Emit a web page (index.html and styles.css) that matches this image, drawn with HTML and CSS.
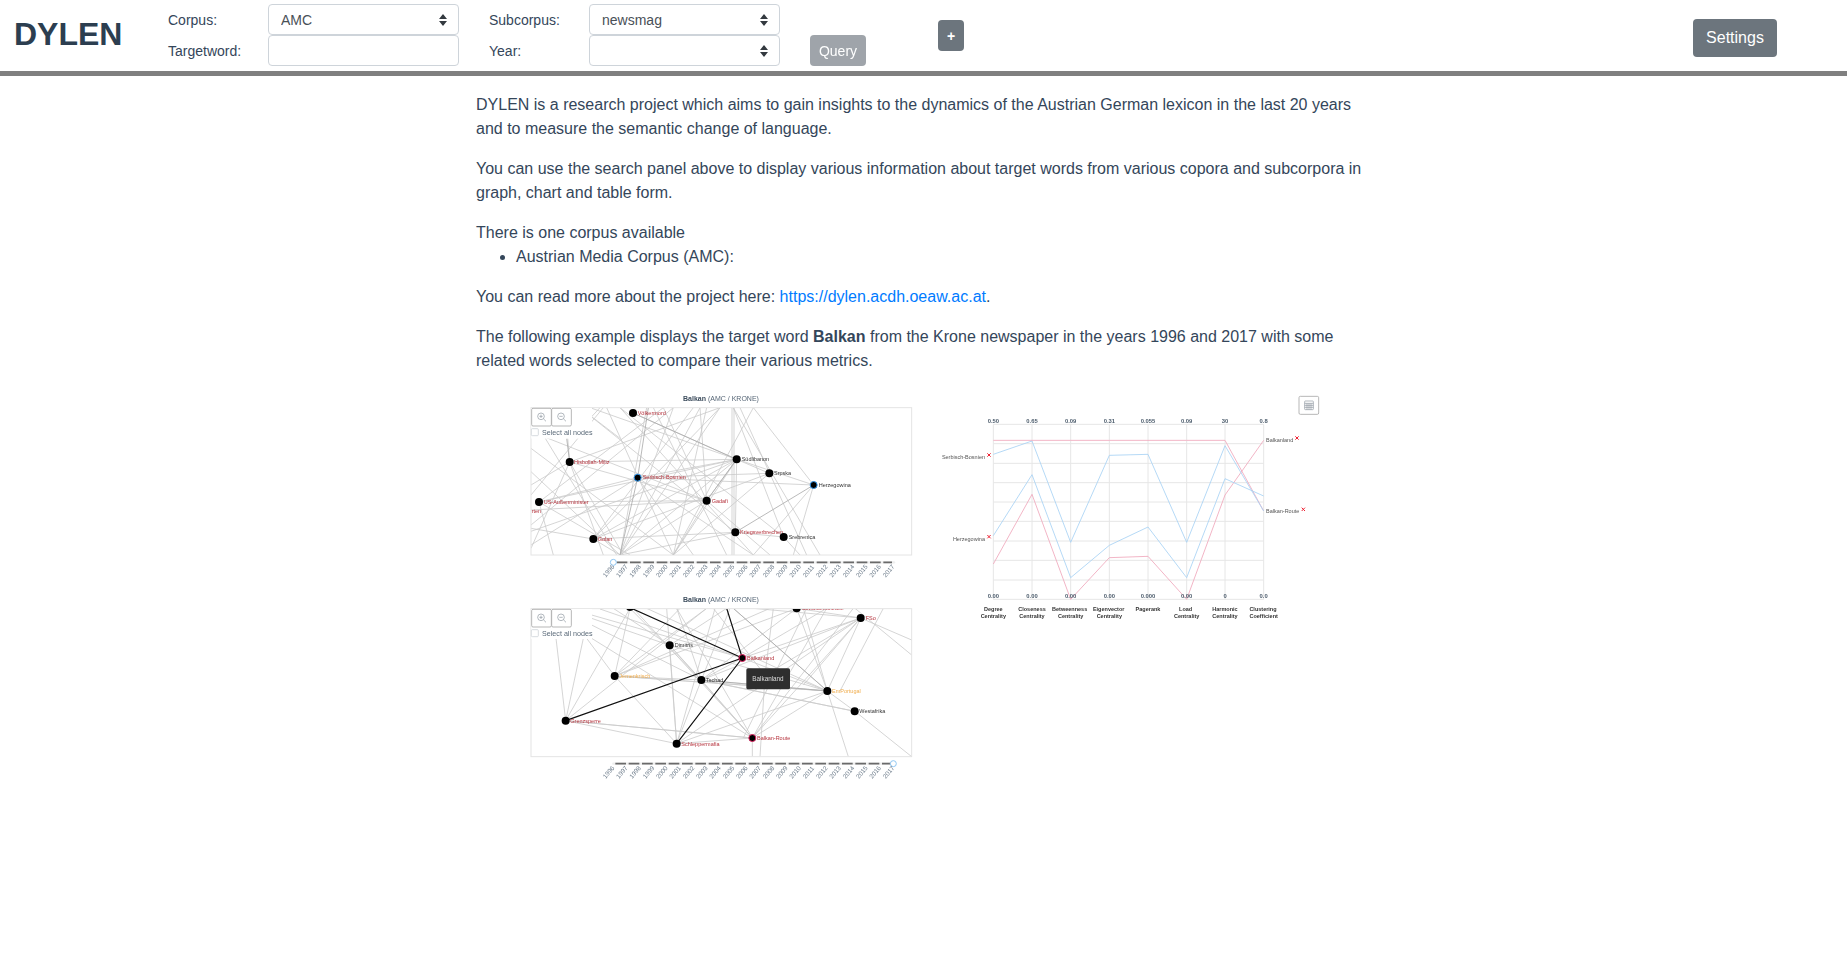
FILE: index.html
```html
<!DOCTYPE html>
<html lang="en">
<head>
    <meta charset="UTF-8">
    <title>DYLEN</title>
    <link rel="stylesheet" href="styles.css">
</head>
<body>

    <header class="topbar">
        <div class="brand">DYLEN</div>
        <form class="query-form">
            <label>Corpus:</label>
            <select><option>AMC</option></select>
            <label>Subcorpus:</label>
            <select><option>newsmag</option></select>
            <span></span>
            <label>Targetword:</label>
            <input type="text">
            <label>Year:</label>
            <select><option></option></select>
            <button type="button" class="btn btn-query" disabled>Query</button>
        </form>
        <button type="button" class="btn btn-add">+</button>
        <button type="button" class="btn btn-settings">Settings</button>
    </header>

    <main class="content">
        <p>DYLEN is a research project which aims to gain insights to the dynamics of the Austrian German lexicon in the last 20 years and to measure the semantic change of language.</p>
        <p>You can use the search panel above to display various information about target words from various copora and subcorpora in graph, chart and table form.</p>
        <div class="corpora">
            There is one corpus available
            <ul>
                <li>Austrian Media Corpus (AMC):</li>
            </ul>
        </div>
        <p>You can read more about the project here: <a href="#">https://dylen.acdh.oeaw.ac.at</a>.</p>
        <p>The following example displays the target word <b>Balkan</b> from the Krone newspaper in the years 1996 and 2017 with some related words selected to compare their various metrics.</p>

        <div class="figures">
            <div class="graphs">
                <!-- first graph, 1996 -->
                <svg class="figure graph-top" viewBox="0 0 1230 600">
                    <text class="title" x="603" y="47"><tspan class="bold">Balkan</tspan> (AMC / KRONE)</text>
                    <rect class="frame" x="33" y="68" width="1142" height="442"/>
                    <svg x="34" y="69" width="1140" height="440" viewBox="34 69 1140 440">
                        <path class="edge" d="M339 84L650 223M210 68L650 223M430 68L560 347M650 223L300 510M650 223L460 510M650 223L30 440M650 223L149 231M650 223L353 278M650 223L57 351M650 223L560 347M650 223L646 442M650 223L881 300M650 223L748 265M660 68L860 510M700 68L881 300M881 300L353 278M881 300L820 510M881 300L700 510M748 265L353 278M748 265L220 462M748 265L460 510M560 347L57 351M560 347L149 231M560 347L300 510M560 347L460 510M560 347L540 68M560 347L33 140M560 347L750 510M560 347L33 375M353 278L700 510M353 278L57 351M353 278L33 480M353 278L520 510M149 231L33 300M149 231L310 510M149 231L250 510M149 231L600 68M149 231L33 490M149 231L140 120M220 462L600 68M220 462L646 442M220 462L520 68M220 462L650 223M220 462L33 430M220 462L300 510M57 351L430 68M57 351L100 510M57 351L330 510M646 442L791 456M646 442L300 510M646 442L180 68M791 456L640 68M791 456L300 68M791 456L840 510M33 190L460 510M33 260L300 510M33 420L460 68M33 90L290 510M250 68L33 330M460 68L300 510M540 68L300 510M600 68L300 510M300 510L380 68M460 510L260 68M460 510L560 68M460 510L700 68M700 510L300 68M900 510L640 68M620 510L400 68M215 95L240 68M215 95L300 160M33 150L100 68M636 68L636 510M642 68L642 510"/>
                        <path class="edge edge-mid" d="M339 84L650 223M353 278L385 68M353 278L300 510M881 300L646 442M560 347L650 223M140 160L149 231"/>
                    </svg>
                    <rect class="panel" x="34" y="69" width="182" height="92"/>
                    <circle class="node" cx="339" cy="84" r="12"/><text class="label red" x="353" y="89">Völkermord</text>
                    <circle class="node" cx="650" cy="223" r="12"/><text class="label" x="665" y="228">Südlibanon</text>
                    <circle class="node" cx="748" cy="265" r="12"/><text class="label" x="762" y="271">Srpska</text>
                    <circle class="node ring-blue" cx="881" cy="300" r="10.5"/><text class="label" x="896" y="305">Herzegowina</text>
                    <circle class="node" cx="149" cy="231" r="12"/><text class="label red" x="162" y="236">Hisbollah-Miliz</text>
                    <circle class="node ring-blue" cx="353" cy="278" r="10.5"/><text class="label red" x="368" y="283">Serbisch-Bosnien</text>
                    <circle class="node" cx="57" cy="351" r="12"/><text class="label red" x="71" y="356">US-Außenminister</text>
                    <text class="label red" x="35" y="384">rten</text>
                    <circle class="node" cx="560" cy="347" r="12"/><text class="label red" x="575" y="353">Gadafi</text>
                    <circle class="node" cx="646" cy="442" r="12"/><text class="label red" x="660" y="448">Kriegsverbrechen</text>
                    <circle class="node" cx="791" cy="456" r="12"/><text class="label" x="806" y="461">Srebrenica</text>
                    <circle class="node" cx="220" cy="462" r="12"/><text class="label red" x="233" y="468">Golan</text>

                    <rect class="zoom-btn" x="35" y="70" width="59" height="53" rx="4"/>
                    <rect class="zoom-btn" x="95" y="70" width="59" height="53" rx="4"/>
                    <g class="zoom-icon"><circle cx="63" cy="94" r="10"/><path d="M71 102L78 109M58 94H68M63 89V99"/></g>
                    <g class="zoom-icon"><circle cx="123" cy="94" r="10"/><path d="M131 102L138 109M118 94H128"/></g>
                    <rect class="check" x="34" y="131" width="21" height="21" rx="3"/>
                    <text class="check-label" x="66" y="149">Select all nodes</text>

                    <line class="rail" x1="280" y1="532" x2="1122" y2="532"/>
                    <line class="dashes" x1="290" y1="532" x2="1116" y2="532"/>
                    <circle class="handle" cx="280" cy="532" r="9"/>
                    <g class="years">
                        <text transform="translate(257 578) rotate(-50)">1996</text>
                        <text transform="translate(297 578) rotate(-50)">1997</text>
                        <text transform="translate(337 578) rotate(-50)">1998</text>
                        <text transform="translate(377 578) rotate(-50)">1999</text>
                        <text transform="translate(417 578) rotate(-50)">2000</text>
                        <text transform="translate(457 578) rotate(-50)">2001</text>
                        <text transform="translate(497 578) rotate(-50)">2002</text>
                        <text transform="translate(537 578) rotate(-50)">2003</text>
                        <text transform="translate(577 578) rotate(-50)">2004</text>
                        <text transform="translate(617 578) rotate(-50)">2005</text>
                        <text transform="translate(657 578) rotate(-50)">2006</text>
                        <text transform="translate(697 578) rotate(-50)">2007</text>
                        <text transform="translate(737 578) rotate(-50)">2008</text>
                        <text transform="translate(777 578) rotate(-50)">2009</text>
                        <text transform="translate(817 578) rotate(-50)">2010</text>
                        <text transform="translate(857 578) rotate(-50)">2011</text>
                        <text transform="translate(897 578) rotate(-50)">2012</text>
                        <text transform="translate(937 578) rotate(-50)">2013</text>
                        <text transform="translate(977 578) rotate(-50)">2014</text>
                        <text transform="translate(1017 578) rotate(-50)">2015</text>
                        <text transform="translate(1057 578) rotate(-50)">2016</text>
                        <text transform="translate(1097 578) rotate(-50)">2017</text>
                    </g>
                </svg>

                <!-- second graph, 2017 -->
                <svg class="figure" viewBox="0 0 1230 600">
                    <text class="title" x="603" y="50"><tspan class="bold">Balkan</tspan> (AMC / KRONE)</text>
                    <rect class="frame" x="33" y="71" width="1142" height="444"/>
                    <svg x="34" y="72" width="1140" height="442" viewBox="34 72 1140 442">
                        <path class="edge" d="M137 407L108 160M137 407L190 160M137 407L330 70M137 407L560 70M137 407L470 476M137 407L697 459M284 273L200 160M284 273L330 70M284 273L560 70M284 273L480 70M284 273L750 70M284 273L544 285M284 273L922 318M284 273L470 476M284 273L830 70M449 181L215 100M449 181L470 476M449 181L697 459M449 181L544 285M449 181L922 318M449 181L280 70M449 181L620 70M544 285L330 70M544 285L215 120M544 285L470 70M544 285L630 70M544 285L830 70M544 285L1022 99M544 285L922 318M544 285L697 459M544 285L470 476M544 285L1005 379M667 219L215 90M667 219L240 72M667 219L920 70M667 219L1022 99M667 219L922 318M667 219L544 285M697 459L1022 99M697 459L922 318M697 459L470 476M697 459L470 70M697 459L340 70M697 459L215 160M697 459L697 515M697 459L920 70M697 459L137 407M470 476L1022 99M470 476L922 318M470 476L440 70M922 318L380 70M922 318L640 70M922 318L830 70M922 318L1022 99M922 318L1005 379M922 318L985 515M922 318L850 70M922 318L284 273M1005 379L1175 515M1005 379L544 285M1022 99L1175 165M1022 99L830 70M1022 99L700 70M1022 99L850 300M1090 70L960 318M1005 70L1175 210M735 270L720 515M735 270L1022 99M735 270L580 70M735 270L760 70M1000 70L697 459M860 70L670 459M585 70L470 476"/>
                        <path class="edge edge-mid" d="M544 285L922 318M640 70L922 318"/>
                        <path class="edge edge-hot" d="M667 219L330 68M667 219L620 70M667 219L137 407M667 219L470 476"/>
                        <circle class="node" cx="830" cy="70" r="12"/>
                        <circle class="node" cx="330" cy="66" r="12"/>
                        <text class="label red" x="845" y="76">Sozialdemokratie</text>
                    </svg>
                    <rect class="panel" x="34" y="72" width="182" height="90"/>
                    <circle class="node" cx="1022" cy="99" r="12"/><text class="label red" x="1037" y="105">FSo</text>
                    <circle class="node" cx="449" cy="181" r="12"/><text class="label" x="464" y="186">Dimitris</text>
                    <circle class="node ring-pink" cx="667" cy="219" r="10.5"/><text class="label red" x="681" y="225">Balkanland</text>
                    <circle class="node" cx="284" cy="273" r="12"/><text class="label orange" x="298" y="279">Jemenkrisch</text>
                    <circle class="node" cx="544" cy="285" r="12"/><text class="label" x="558" y="291">Tschad</text>
                    <circle class="node" cx="735" cy="270" r="12"/>
                    <circle class="node" cx="922" cy="318" r="12"/><text class="label orange" x="936" y="324">EmPortugal</text>
                    <circle class="node" cx="1004" cy="379" r="12"/><text class="label" x="1018" y="384">Westafrika</text>
                    <circle class="node" cx="137" cy="407" r="12"/><text class="label red" x="151" y="413">Grenzsperre</text>
                    <circle class="node" cx="470" cy="476" r="12"/><text class="label red" x="484" y="482">Schleppermafia</text>
                    <circle class="node ring-pink" cx="697" cy="459" r="10.5"/><text class="label red" x="711" y="465">Balkan-Route</text>

                    <rect class="tip" x="679" y="250" width="131" height="63" rx="5"/>
                    <text class="tip-text" x="744" y="289">Balkanland</text>

                    <rect class="zoom-btn" x="35" y="73" width="59" height="53" rx="4"/>
                    <rect class="zoom-btn" x="95" y="73" width="59" height="53" rx="4"/>
                    <g class="zoom-icon"><circle cx="63" cy="97" r="10"/><path d="M71 105L78 112M58 97H68M63 92V102"/></g>
                    <g class="zoom-icon"><circle cx="123" cy="97" r="10"/><path d="M131 105L138 112M118 97H128"/></g>
                    <rect class="check" x="34" y="134" width="21" height="21" rx="3"/>
                    <text class="check-label" x="66" y="152">Select all nodes</text>

                    <line class="rail" x1="280" y1="536" x2="1122" y2="536"/>
                    <line class="dashes" x1="286" y1="536" x2="1112" y2="536"/>
                    <circle class="handle" cx="1120" cy="536" r="9"/>
                    <g class="years">
                        <text transform="translate(257 582) rotate(-50)">1996</text>
                        <text transform="translate(297 582) rotate(-50)">1997</text>
                        <text transform="translate(337 582) rotate(-50)">1998</text>
                        <text transform="translate(377 582) rotate(-50)">1999</text>
                        <text transform="translate(417 582) rotate(-50)">2000</text>
                        <text transform="translate(457 582) rotate(-50)">2001</text>
                        <text transform="translate(497 582) rotate(-50)">2002</text>
                        <text transform="translate(537 582) rotate(-50)">2003</text>
                        <text transform="translate(577 582) rotate(-50)">2004</text>
                        <text transform="translate(617 582) rotate(-50)">2005</text>
                        <text transform="translate(657 582) rotate(-50)">2006</text>
                        <text transform="translate(697 582) rotate(-50)">2007</text>
                        <text transform="translate(737 582) rotate(-50)">2008</text>
                        <text transform="translate(777 582) rotate(-50)">2009</text>
                        <text transform="translate(817 582) rotate(-50)">2010</text>
                        <text transform="translate(857 582) rotate(-50)">2011</text>
                        <text transform="translate(897 582) rotate(-50)">2012</text>
                        <text transform="translate(937 582) rotate(-50)">2013</text>
                        <text transform="translate(977 582) rotate(-50)">2014</text>
                        <text transform="translate(1017 582) rotate(-50)">2015</text>
                        <text transform="translate(1057 582) rotate(-50)">2016</text>
                        <text transform="translate(1097 582) rotate(-50)">2017</text>
                    </g>
                </svg>
            </div>

            <!-- parallel coordinates chart -->
            <svg class="figure chart" viewBox="0 0 1200 720">
                <rect class="table-btn" x="1107" y="34" width="59" height="54" rx="4"/>
                <g class="table-icon">
                    <rect x="1124" y="48" width="26" height="26" rx="2"/>
                    <path d="M1124 55H1150M1124 61H1150M1124 67H1150M1131 55V74M1137 55V74M1143 55V74"/>
                </g>
                <path class="grid" d="M190 118H1001M190 176H1001M190 235H1001M190 293H1001M190 351H1001M190 409H1001M190 468H1001M190 526H1001M190 585H1001M190 643H1001M190 118V643M306 118V643M422 118V643M538 118V643M654 118V643M770 118V643M885 118V643M1001 118V643"/>
                <polyline class="series pink" points="190,166 306,166 422,166 538,166 654,166 770,166 885,166 1001,378"/>
                <polyline class="series pink" points="190,537 306,328 422,643 538,518 654,514 770,643 885,330 1001,166"/>
                <polyline class="series blue" points="190,208 306,168 422,472 538,211 654,208 770,472 885,182 1001,378"/>
                <polyline class="series blue" points="190,452 306,269 422,578 538,481 654,426 770,578 885,281 1001,333"/>
                <g class="axis-value">
                    <text x="190" y="113">0.50</text><text x="306" y="113">0.65</text><text x="422" y="113">0.09</text><text x="538" y="113">0.31</text><text x="654" y="113">0.055</text><text x="770" y="113">0.09</text><text x="885" y="113">30</text><text x="1001" y="113">0.8</text>
                    <text x="190" y="640">0.00</text><text x="306" y="640">0.00</text><text x="422" y="640">0.00</text><text x="538" y="640">0.00</text><text x="654" y="640">0.000</text><text x="770" y="640">0.00</text><text x="885" y="640">0</text><text x="1001" y="640">0.0</text>
                </g>
                <g class="axis-name">
                    <text x="190" y="679">Degree</text><text x="190" y="700">Centrality</text>
                    <text x="306" y="679">Closeness</text><text x="306" y="700">Centrality</text>
                    <text x="419" y="679">Betweenness</text><text x="422" y="700">Centrality</text>
                    <text x="536" y="679">Eigenvector</text><text x="538" y="700">Centrality</text>
                    <text x="654" y="679">Pagerank</text>
                    <text x="767" y="679">Load</text><text x="770" y="700">Centrality</text>
                    <text x="885" y="679">Harmonic</text><text x="885" y="700">Centrality</text>
                    <text x="999" y="679">Clustering</text><text x="1001" y="700">Coefficient</text>
                </g>
                <text class="series-name end" x="165" y="223">Serbisch-Bosnien</text>
                <text class="series-name end" x="165" y="467">Herzegowina</text>
                <text class="series-name" x="1008" y="171">Balkanland</text>
                <text class="series-name" x="1008" y="385">Balkan-Route</text>
                <path class="remove" d="M172 205L182 215M182 205L172 215M172 450L182 460M182 450L172 460M1096 154L1106 164M1106 154L1096 164M1115 368L1125 378M1125 368L1115 378"/>
            </svg>
        </div>
    </main>

</body>
</html>
```

FILE: styles.css
```css
* {
    box-sizing: border-box;
}
body {
    margin: 0;
    font-family: "Liberation Sans", Arial, sans-serif;
    font-size: 16px;
    line-height: 24px;
    color: #34465a;
    background: #fff;
}

/* top bar */
.topbar {
    display: flex;
    align-items: center;
    height: 76px;
    border-bottom: 5px solid #808080;
}
.brand {
    width: 168px;
    padding-left: 14px;
    font-size: 32px;
    line-height: 38px;
    font-weight: bold;
    color: #2c3e50;
    margin-top: -3px;
}
.query-form {
    display: grid;
    grid-template-columns: 100px 191px 100px 191px 86px;
    grid-template-rows: 31px 31px;
    column-gap: 0;
    align-self: flex-start;
    padding-top: 4px;
    font-size: 14px;
    width: 679px;
}
.query-form label {
    line-height: 33px;
}
.query-form label:nth-of-type(2),
.query-form label:nth-of-type(4) {
    margin-left: 30px;
    width: 100px;
}
.query-form select,
.query-form input {
    width: 191px;
    height: 31px;
    border: 1px solid #ced4da;
    border-radius: 4px;
    background-color: #fff;
    color: #495057;
    font: 14px "Liberation Sans", Arial, sans-serif;
    padding: 0 12px;
}
.query-form select {
    appearance: none;
    background-image: url("data:image/svg+xml,%3Csvg xmlns='http://www.w3.org/2000/svg' width='8' height='12'%3E%3Cpath fill='%23343a40' d='M4 0L8 5H0zM4 12L0 7H8z'/%3E%3C/svg%3E");
    background-repeat: no-repeat;
    background-position: right 11px center;
}
.query-form label:nth-of-type(1) { grid-column: 1; }
.query-form label:nth-of-type(3) { grid-column: 1; grid-row: 2; }
.query-form input { grid-column: 2; grid-row: 2; }
.query-form label:nth-of-type(2) { grid-column: 3; }
.query-form label:nth-of-type(4) { grid-column: 3; grid-row: 2; }
.query-form select:nth-of-type(2) { grid-column: 4; grid-row: 1; margin-left: 30px; }
.query-form select:nth-of-type(3) { grid-column: 4; grid-row: 2; margin-left: 30px; }

.btn {
    border: none;
    border-radius: 4px;
    background: #6c757d;
    color: #fff;
    font-family: "Liberation Sans", Arial, sans-serif;
    cursor: pointer;
}
.btn-query {
    grid-column: 5;
    grid-row: 2;
    width: 56px;
    height: 31px;
    margin-left: 60px;
    font-size: 14px;
    opacity: 0.65;
    padding: 0;
}
.btn-add {
    width: 26px;
    height: 31px;
    margin-left: 91px;
    padding: 0;
    font-size: 14px;
    font-weight: bold;
}
.btn-settings {
    width: 84px;
    height: 38px;
    margin-left: auto;
    margin-right: 70px;
    margin-top: 5px;
    font-size: 16px;
    padding: 0;
}

/* text */
.content {
    width: 896px;
    margin-left: 476px;
    padding-top: 17px;
}
.content p {
    margin: 0 0 16px;
}
.corpora {
    margin-bottom: 16px;
}
.corpora ul {
    margin: 0;
    padding-left: 40px;
}
.content a {
    color: #007bff;
    text-decoration: none;
}

/* pictures */
.figures {
    display: flex;
    margin-top: -4px;
    padding-left: 44px;
}
.graphs {
    width: 410px;
}
.figure {
    display: block;
    width: 410px;
    height: 200px;
    font-family: "Liberation Sans", Arial, sans-serif;
    filter: blur(0.4px);
}
.chart {
    width: 400px;
    height: 240px;
}

.title {
    font-size: 21px;
    fill: #566676;
    text-anchor: middle;
}
.bold {
    font-weight: bold;
    fill: #3d4d5d;
}
.frame {
    fill: #fff;
    stroke: #e4e4e4;
    stroke-width: 3;
}
.edge {
    fill: none;
    stroke: #cacaca;
    stroke-width: 2.4;
}
.edge-mid {
    stroke: #a8a8a8;
}
.edge-hot {
    stroke: #111;
    stroke-width: 3.6;
}
.panel {
    fill: #fff;
}
.node {
    fill: #000;
}
.ring-blue {
    stroke: #2f92e6;
    stroke-width: 3;
}
.ring-pink {
    stroke: #e0205f;
    stroke-width: 3;
}
.label {
    font-size: 16.5px;
    fill: #333;
}
.red {
    fill: #b5323c;
}
.orange {
    fill: #f0ad4e;
}
.zoom-btn,
.table-btn {
    fill: #fff;
    stroke: #a8a8a8;
    stroke-width: 2.5;
}
.zoom-icon,
.table-icon {
    fill: none;
    stroke: #7f8a94;
    stroke-width: 1.8;
}
.check {
    fill: #fff;
    stroke: #c4cad0;
    stroke-width: 2;
}
.check-label {
    font-size: 21.5px;
    fill: #5c6b7a;
}
.rail {
    stroke: #eee;
    stroke-width: 7;
    stroke-linecap: round;
}
.dashes {
    stroke: #6a6a6a;
    stroke-width: 5;
    stroke-dasharray: 32 8;
}
.handle {
    fill: #fff;
    stroke: #8fc6f2;
    stroke-width: 3;
}
.years {
    font-size: 19px;
    fill: #6b7a89;
}
.tip {
    fill: #2e2e2e;
}
.tip-text {
    font-size: 19px;
    fill: #ddd;
    text-anchor: middle;
}

.grid {
    fill: none;
    stroke: #e6e6e6;
    stroke-width: 3;
}
.series {
    fill: none;
    stroke-width: 2.6;
}
.series.pink {
    stroke: #f0a9bd;
}
.series.blue {
    stroke: #a9d3f5;
}
.axis-value {
    font-size: 17.5px;
    font-weight: bold;
    fill: #4b5b6b;
    text-anchor: middle;
}
.axis-name {
    font-size: 16.5px;
    font-weight: bold;
    fill: #333;
    text-anchor: middle;
}
.series-name {
    font-size: 16.5px;
    fill: #555;
}
.series-name.end {
    text-anchor: end;
}
.remove {
    fill: none;
    stroke: #ee2233;
    stroke-width: 3;
}
```
